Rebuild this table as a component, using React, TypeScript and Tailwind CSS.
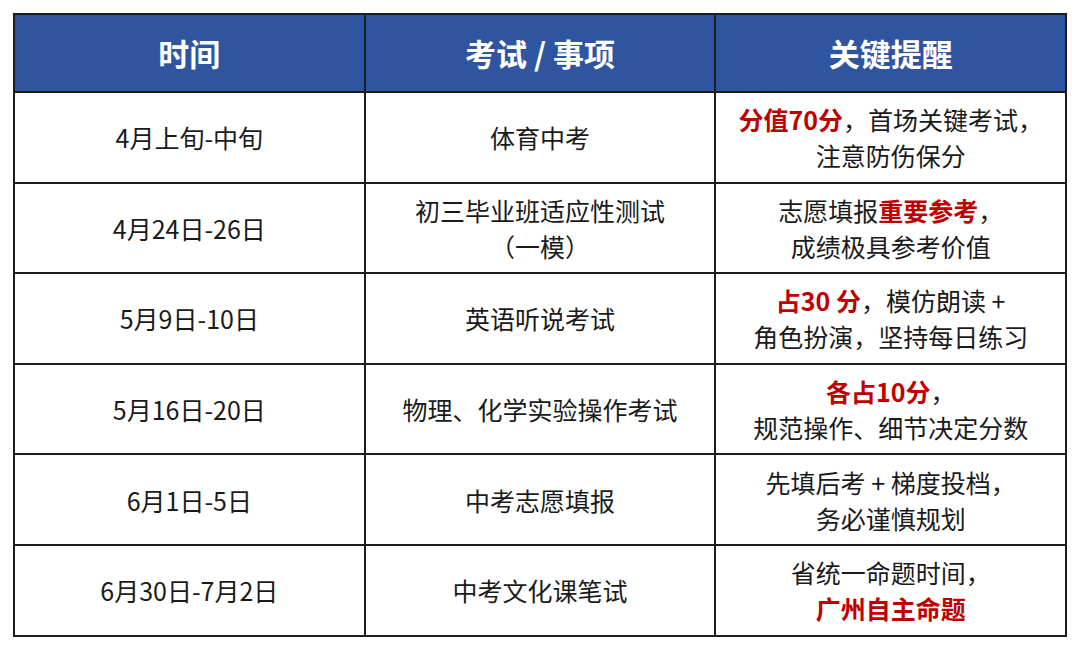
import React from "react";

type Row = { time: string; exam: React.ReactNode; tip: React.ReactNode };

const R = ({ children }: { children: React.ReactNode }) => (
  <span className="font-bold text-[#c00000]">{children}</span>
);

const rows: Row[] = [
  {
    time: "4月上旬-中旬",
    exam: "体育中考",
    tip: (
      <>
        <R>分值70分</R>，首场关键考试，
        <br />
        注意防伤保分
      </>
    ),
  },
  {
    time: "4月24日-26日",
    exam: (
      <>
        初三毕业班适应性测试
        <br />
        （一模）
      </>
    ),
    tip: (
      <>
        志愿填报<R>重要参考</R>，
        <br />
        成绩极具参考价值
      </>
    ),
  },
  {
    time: "5月9日-10日",
    exam: "英语听说考试",
    tip: (
      <>
        <R>占30 分</R>，模仿朗读 +
        <br />
        角色扮演，坚持每日练习
      </>
    ),
  },
  {
    time: "5月16日-20日",
    exam: "物理、化学实验操作考试",
    tip: (
      <>
        <R>各占10分</R>，
        <br />
        规范操作、细节决定分数
      </>
    ),
  },
  {
    time: "6月1日-5日",
    exam: "中考志愿填报",
    tip: (
      <>
        先填后考 + 梯度投档，
        <br />
        务必谨慎规划
      </>
    ),
  },
  {
    time: "6月30日-7月2日",
    exam: "中考文化课笔试",
    tip: (
      <>
        省统一命题时间，
        <br />
        <R>广州自主命题</R>
      </>
    ),
  },
];

export default function App() {
  return (
    <div
      className="w-[1080px] h-[650px] bg-white pt-[13px] pl-[13px]"
      style={{ fontFamily: '"Noto Sans CJK SC", "Noto Sans", sans-serif' }}
    >
      <table className="w-[1054px] table-fixed border-collapse border-2 border-[#1c1c1c] text-center">
        <thead>
          <tr className="h-[78px] bg-[#2f54a0] text-white text-[31px] font-bold">
            <th className="border-2 border-[#1c1c1c]">时间</th>
            <th className="border-2 border-[#1c1c1c]">考试 / 事项</th>
            <th className="border-2 border-[#1c1c1c]">关键提醒</th>
          </tr>
        </thead>
        <tbody className="text-[25px] leading-[36px] text-[#1a1a1a]">
          {rows.map((r, i) => (
            <tr key={i} className="h-[90.6px]">
              <td className="border-2 border-[#1c1c1c]">{r.time}</td>
              <td className="border-2 border-[#1c1c1c]">{r.exam}</td>
              <td className="border-2 border-[#1c1c1c]">{r.tip}</td>
            </tr>
          ))}
        </tbody>
      </table>
    </div>
  );
}
